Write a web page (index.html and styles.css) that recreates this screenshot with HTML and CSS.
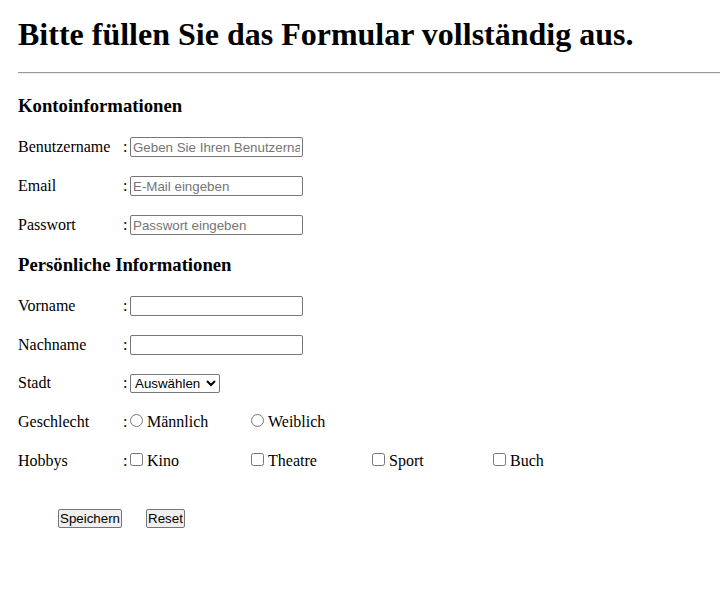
FILE: index.html
```html
<!DOCTYPE html>
<html lang="de">
<head>
<meta charset="utf-8">
<title>Formular</title>
<link rel="stylesheet" href="styles.css">
</head>
<body>
<div class="page">
  <h1 class="title">Bitte füllen Sie das Formular vollständig aus.</h1>
  <hr class="rule">
  <form class="form">
    <h3 class="section">Kontoinformationen</h3>
    <div class="row"><span class="label">Benutzername</span><span class="colon">:</span><input class="field" type="text" placeholder="Geben Sie Ihren Benutzernamen ein"></div>
    <div class="row"><span class="label">Email</span><span class="colon">:</span><input class="field" type="email" placeholder="E-Mail eingeben"></div>
    <div class="row"><span class="label">Passwort</span><span class="colon">:</span><input class="field" type="password" placeholder="Passwort eingeben"></div>
    <h3 class="section">Persönliche Informationen</h3>
    <div class="row"><span class="label">Vorname</span><span class="colon">:</span><input class="field" type="text"></div>
    <div class="row"><span class="label">Nachname</span><span class="colon">:</span><input class="field" type="text"></div>
    <div class="row"><span class="label">Stadt</span><span class="colon">:</span><select class="choice"><option>Auswählen</option><option>Berlin</option><option>Hamburg</option><option>München</option></select></div>
    <div class="row"><span class="label">Geschlecht</span><span class="colon">:</span>
      <label class="opt"><input class="mark" type="radio" name="g">Männlich</label>
      <label class="opt"><input class="mark" type="radio" name="g">Weiblich</label>
    </div>
    <div class="row"><span class="label">Hobbys</span><span class="colon">:</span>
      <label class="opt"><input class="mark" type="checkbox">Kino</label>
      <label class="opt"><input class="mark" type="checkbox">Theatre</label>
      <label class="opt"><input class="mark" type="checkbox">Sport</label>
      <label class="opt"><input class="mark" type="checkbox">Buch</label>
    </div>
    <div class="actions">
      <button class="btn" type="submit">Speichern</button>
      <button class="btn" type="reset">Reset</button>
    </div>
  </form>
</div>
</body>
</html>
```
FILE: styles.css
```css
html, body {
  margin: 0;
  padding: 0;
  background: #ffffff;
}
.page {
  padding: 16px 0 0 18px;
  font-family: "Liberation Serif", "Times New Roman", serif;
  font-size: 16px;
  color: #000000;
}
.title {
  margin: 0;
  font-size: 32px;
  line-height: 36px;
  font-weight: bold;
}
.rule {
  margin: 20px 0 0 0;
  height: 0;
  border: none;
  border-top: 1px solid #9a9a9a;
  border-bottom: 1px solid #eeeeee;
}
.form {
  margin: 0;
}
.section {
  margin: 21px 0 20px 0;
  font-size: 18.72px;
  line-height: 22px;
  font-weight: bold;
}
.row + .section {
  margin-top: 0;
}
.row {
  display: flex;
  align-items: baseline;
  height: 39px;
}
.label {
  width: 105px;
  flex: none;
}
.colon {
  width: 7px;
  flex: none;
}
.field {
  box-sizing: border-box;
  width: 173px;
  height: 20px;
  margin: 0;
  padding: 0 2px;
  border: 1px solid #767676;
  border-radius: 2px;
  font-family: "Liberation Sans", Arial, sans-serif;
  font-size: 13.33px;
  background: #ffffff;
}
.field::placeholder {
  color: #757575;
}
.choice {
  margin: 0;
  width: 90px;
  font-family: "Liberation Sans", Arial, sans-serif;
  font-size: 13.33px;
  border: 1px solid #767676;
  border-radius: 2px;
  background: #ffffff;
  color: #000000;
}
.opt {
  width: 121px;
  flex: none;
}
.mark {
  margin: 0 4px 0 0;
}
.actions {
  display: flex;
  gap: 24px;
  margin-top: 18px;
  padding-left: 40px;
}
.btn {
  margin: 0;
  padding: 1px 1px;
  font-family: "Liberation Sans", Arial, sans-serif;
  font-size: 13.33px;
  background: #efefef;
  border: 1px solid #767676;
  border-radius: 2px;
  color: #000000;
}
```
